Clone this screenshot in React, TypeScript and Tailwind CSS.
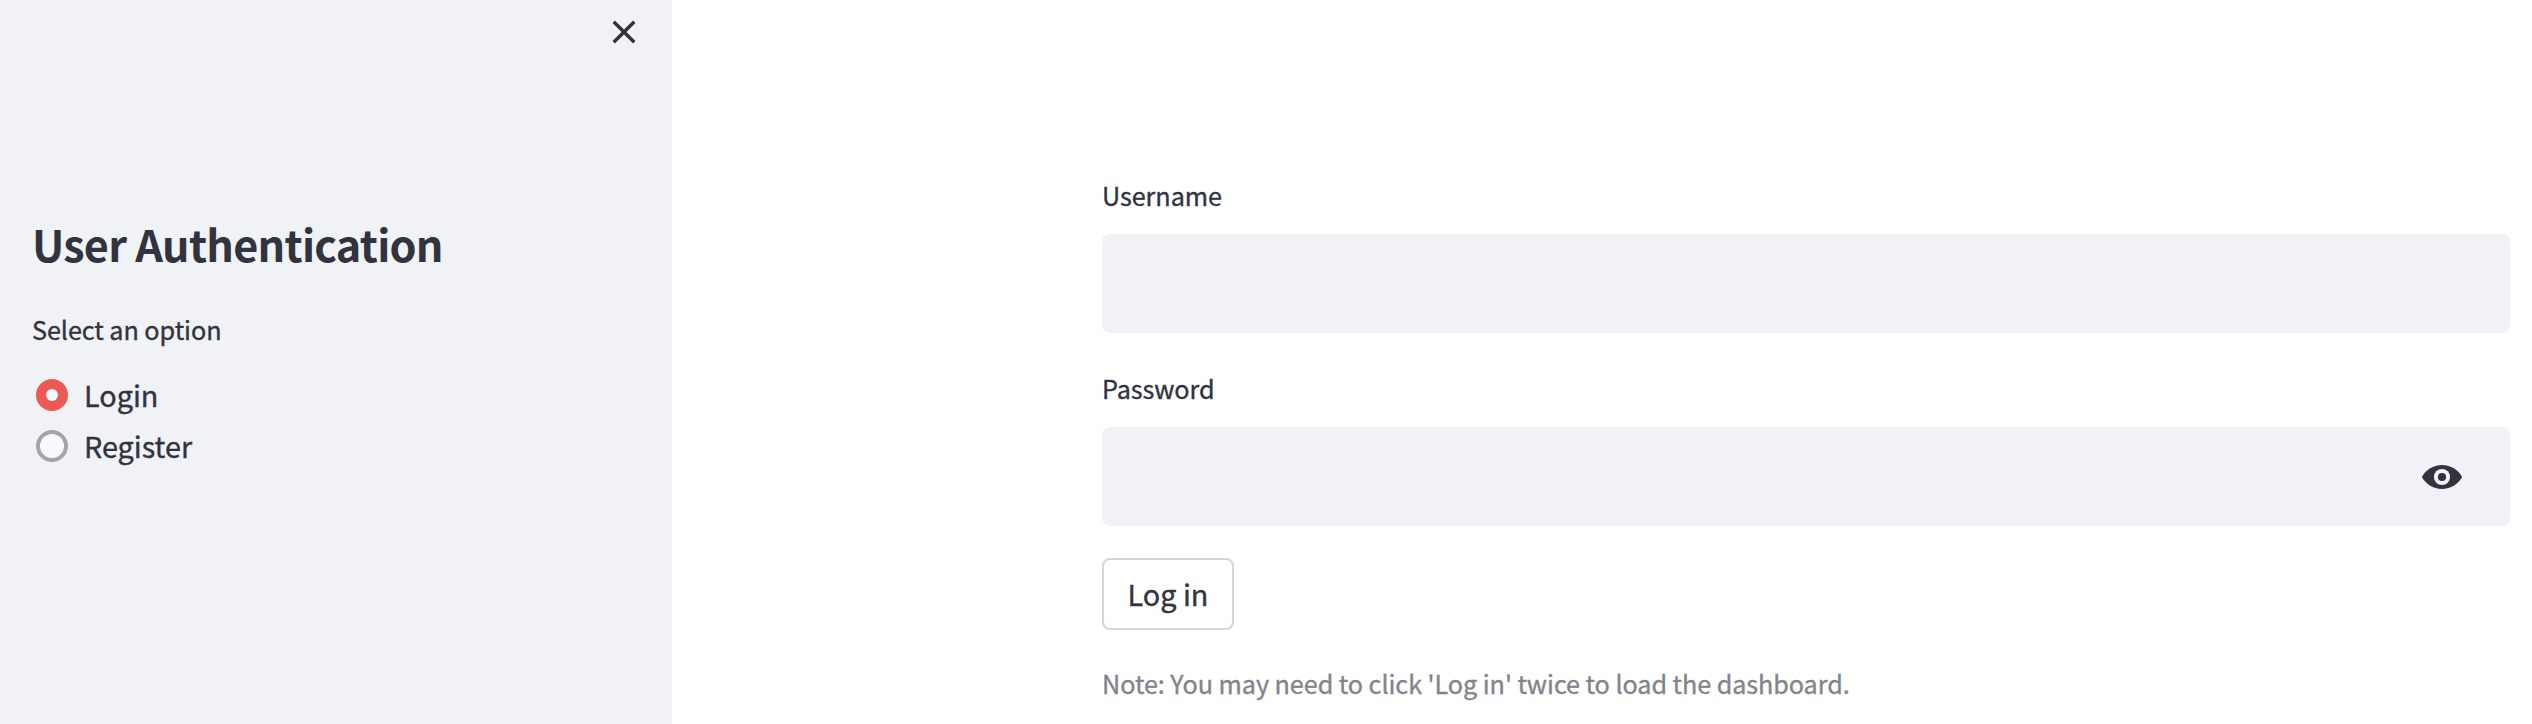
const label = "whitespace-nowrap text-[25.2px] leading-10 tracking-[-0.06px]";

function CloseIcon() {
  return (
    <svg width="24" height="24" viewBox="0 0 24 24" fill="none" stroke="#31333f" strokeWidth="3.4">
      <path d="M1.7 1.7 22.3 22.3M22.3 1.7 1.7 22.3" />
    </svg>
  );
}

function EyeIcon() {
  return (
    <svg width="40" height="24" viewBox="0 0 40 24">
      <path fill="#31333f" d="M.3 12.8Q-.1 12 .3 11.2C4 5 11 0 20 0S36 5 39.7 11.2Q40.1 12 39.7 12.8C36 19 29 24 20 24S4 19 .3 12.8Z" />
      <circle cx="20" cy="12" r="8.1" fill="#f0f2f6" />
      <circle cx="20" cy="12" r="4.1" fill="#31333f" />
    </svg>
  );
}

export default function App() {
  return (
    <div className="flex h-[724px] w-[2532px] overflow-hidden bg-white font-['Noto_Sans_CJK_SC',sans-serif] text-[#31333f] [-webkit-text-stroke:0.35px]">
      <aside className="flex w-[672px] shrink-0 flex-col bg-[#f0f2f6] pl-8">
        <div className="flex h-16 items-center justify-end pr-9">
          <CloseIcon />
        </div>
        <h1 className="mt-[147px] whitespace-nowrap text-[43.2px] leading-[64px] font-bold tracking-[-0.75px] [-webkit-text-stroke:0]">User Authentication</h1>
        <p className={`mt-[34px] ${label}`}>Select an option</p>
        <label className="mt-5 flex items-center gap-4 pl-1 text-[28.8px] leading-[51px]">
          <span className="flex size-8 items-center justify-center rounded-full bg-[#eb5a54]">
            <span className="size-3 rounded-full bg-[#f9f9fb]" />
          </span>
          Login
        </label>
        <label className="flex items-center gap-4 pl-1 text-[28.8px] leading-[51px]">
          <span className="size-8 rounded-full border-4 border-[#a4a5aa] bg-[#f9f9fb]" />
          Register
        </label>
      </aside>
      <main className="ml-[430px] w-[1408px] shrink-0 pt-[175px]">
        <p className={label}>Username</p>
        <div className="mt-[19px] h-[99px] rounded-lg bg-[#f0f2f6]" />
        <p className={`mt-[35px] ${label}`}>Password</p>
        <div className="mt-[19px] flex h-[99px] items-center justify-end rounded-lg bg-[#f0f2f6] pr-12">
          <EyeIcon />
        </div>
        <button className="mt-8 block h-[72px] w-[132px] rounded-lg border-2 border-[#d5d5d7] text-[28.8px] [-webkit-text-stroke:0.35px]">Log in</button>
        <p className={`mt-[33px] text-[#83848b] ${label}`}>Note: You may need to click 'Log in' twice to load the dashboard.</p>
      </main>
    </div>
  );
}
